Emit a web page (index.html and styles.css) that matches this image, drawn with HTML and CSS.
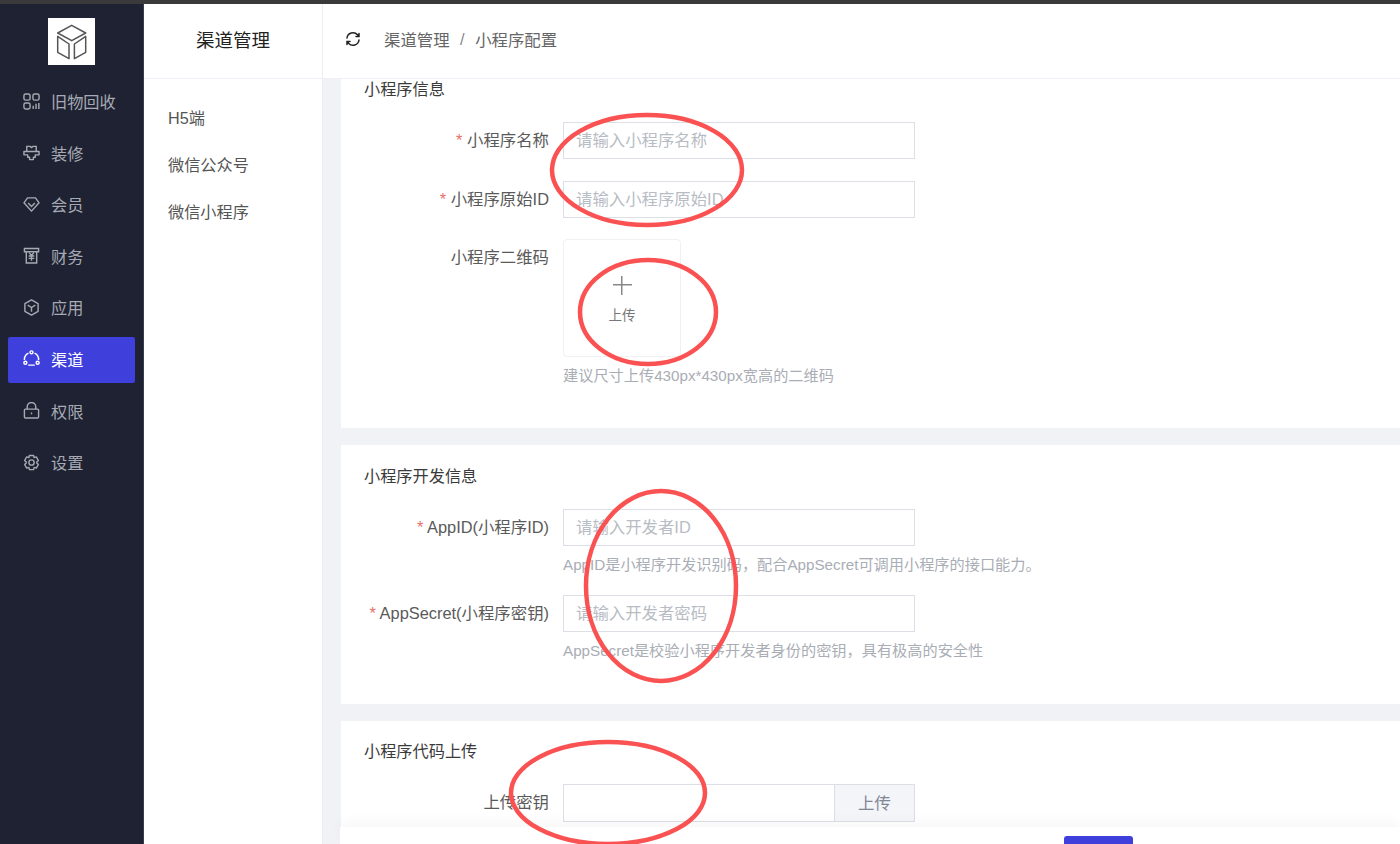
FILE: index.html
```html
<!DOCTYPE html>
<html lang="zh-CN">
<head>
<meta charset="utf-8">
<title>小程序配置</title>
<link rel="stylesheet" href="styles.css">
</head>
<body>
<div class="topstrip"></div>
<div class="app">
  <aside class="side">
    <div class="logo">
      <svg viewBox="0 0 47 47" width="47" height="47" fill="none" stroke="#555" stroke-width="1.500" stroke-linejoin="round"><path d="M23.700 7.300L37.700 15 23.700 22.700 9.700 15z"/><path d="M9.700 18.300V34.300L21 40.700V26z"/><path d="M37.700 18.300V34.300L26.400 40.700V26z"/></svg>
    </div>
    <nav class="nav">
      <a class="nav-item"><svg class="ico" viewBox="0 0 18 18"><rect x="1" y="1" width="6.500" height="6.500" rx="1.800"/><rect x="10.500" y="1" width="6.500" height="6.500" rx="1.800"/><rect x="1" y="10.500" width="6.500" height="6.500" rx="1.800"/><path d="M10.800 13.500V17M13.800 11.500V17M16.800 10.500V17"/></svg><span>旧物回收</span></a>
      <a class="nav-item"><svg class="ico" viewBox="0 0 18 18"><path d="M4 8V2.500h3.500L9 3.800l1.500-1.300H14V8"/><path d="M1 8h16v3.500h-4v2.500h-2v2.500H7V14H5v-2.500H1z" stroke-linejoin="round"/></svg><span>装修</span></a>
      <a class="nav-item"><svg class="ico" viewBox="0 0 18 18"><path d="M4.800 2h8.400L17 7.200 9 16 1 7.200z" stroke-linejoin="round"/><path d="M5.500 7.500L9 11l3.500-3.500"/></svg><span>会员</span></a>
      <a class="nav-item"><svg class="ico" viewBox="0 0 18 18"><path d="M1.500 1.500h15v3.500h-15z"/><path d="M3.500 5v12h11V5"/><path d="M6.500 6L9 9l2.500-3M6 9.500h6M6 12h6M9 9v5.500"/></svg><span>财务</span></a>
      <a class="nav-item"><svg class="ico" viewBox="0 0 18 18"><path d="M9 1l7 4v8l-7 4-7-4V5z" stroke-linejoin="round"/><path d="M5 6.500L9 9l4-2.500M9 9v4.500"/></svg><span>应用</span></a>
      <a class="nav-item active"><svg class="ico" viewBox="0 0 18 18"><circle cx="9" cy="2.500" r="1.600"/><circle cx="2.500" cy="13.500" r="1.600"/><circle cx="15.500" cy="13.500" r="1.600"/><path d="M5.800 3.300A7.500 7.500 0 0 0 1.500 10.500M12.200 3.300A7.500 7.500 0 0 1 16.500 10.500M5.500 16h7"/></svg><span>渠道</span></a>
      <a class="nav-item"><svg class="ico" viewBox="0 0 18 18"><rect x="1.500" y="7.500" width="15" height="9.500" rx="1"/><path d="M4.500 7.500V5a4.500 4.500 0 0 1 9 0v2.500M9 11v2"/></svg><span>权限</span></a>
      <a class="nav-item"><svg class="ico" viewBox="0 0 18 18"><path d="M6.800 1.500h4.400l.6 2.300 2.300-.7 2.200 3.800-1.700 1.600 0 1 1.700 1.600-2.200 3.800-2.300-.7-.6 2.300H6.800l-.6-2.300-2.300.7-2.200-3.800 1.700-1.600 0-1-1.700-1.600 2.200-3.800 2.300.7z" stroke-linejoin="round"/><circle cx="9" cy="9" r="2.800"/></svg><span>设置</span></a>
    </nav>
  </aside>
  <section class="sub">
    <div class="sub-title">渠道管理</div>
    <ul class="sub-list">
      <li>H5端</li>
      <li>微信公众号</li>
      <li>微信小程序</li>
    </ul>
  </section>
  <main class="main">
    <header class="head">
      <svg class="refresh" viewBox="0 0 16 16" width="16" height="16" fill="none" stroke="#222" stroke-width="1.500" stroke-linecap="round"><path d="M2 7a6 6 0 0 1 10.500-3.200L14 5.500M14 2.500v3h-3"/><path d="M14 9a6 6 0 0 1-10.500 3.200L2 10.500M2 13.500v-3h3"/></svg>
      <span class="crumb">渠道管理</span><span class="sep">/</span><span class="crumb cur">小程序配置</span>
    </header>
    <div class="content">
      <div class="card c1">
        <h3 class="card-title">小程序信息</h3>
        <div class="row"><label class="lbl"><i>*</i> 小程序名称</label><div class="input ph">请输入小程序名称</div></div>
        <div class="row"><label class="lbl"><i>*</i> 小程序原始ID</label><div class="input ph">请输入小程序原始ID</div></div>
        <div class="row r-up"><label class="lbl">小程序二维码</label><div class="up-col"><div class="upload"><span class="plus"></span><span class="up-txt">上传</span></div><p class="hint">建议尺寸上传430px*430px宽高的二维码</p></div></div>
      </div>
      <div class="card c2">
        <h3 class="card-title">小程序开发信息</h3>
        <div class="row r-h"><label class="lbl"><i>*</i> AppID(小程序ID)</label><div class="up-col"><div class="input ph">请输入开发者ID</div><p class="hint h2">AppID是小程序开发识别码，配合AppSecret可调用小程序的接口能力。</p></div></div>
        <div class="row r-h"><label class="lbl"><i>*</i> AppSecret(小程序密钥)</label><div class="up-col"><div class="input ph">请输入开发者密码</div><p class="hint h2">AppSecret是校验小程序开发者身份的密钥，具有极高的安全性</p></div></div>
      </div>
      <div class="card c3">
        <h3 class="card-title">小程序代码上传</h3>
        <div class="row"><label class="lbl">上传密钥</label><div class="group"><div class="field"></div><div class="addon">上传</div></div></div>
      </div>
      <div class="footer"><button class="save" type="button"></button></div>
    </div>
  </main>
</div>
<svg class="marks" width="1400" height="844" viewBox="0 0 1400 844" fill="none" stroke="#fa5252" stroke-width="4.500">
  <ellipse cx="647" cy="170" rx="95" ry="55"/>
  <ellipse cx="648" cy="312" rx="68" ry="52"/>
  <ellipse cx="661" cy="586" rx="75" ry="95"/>
  <ellipse cx="608" cy="793" rx="97" ry="51"/>
</svg>
</body>
</html>
```
FILE: styles.css
```css
* { box-sizing: border-box; }
html, body { margin: 0; height: 100%; }
body {
  width: 1400px; height: 844px; overflow: hidden; position: relative;
  display: flex; flex-direction: column;
  font-family: "Liberation Sans", "Noto Sans CJK SC", sans-serif;
  background: #f0f2f5; color: #555;
}
.topstrip { height: 3.500px; background: #3a3a3a; flex: none; }
.app { flex: 1; display: flex; min-height: 0; }

.side { width: 144px; flex: none; background: #1e2233; border-right: 1px solid #3a3e4c; }
.logo { width: 47px; height: 47px; margin: 14.500px auto 0; background: #fff; }
.logo svg { display: block; }
.nav { margin-top: 14px; display: flex; flex-direction: column; gap: 5.600px; padding: 0 8px; }
.nav-item { height: 46px; display: flex; align-items: center; gap: 11px; padding: 0 0 2px 15px; color: #a7aab2; font-size: 16.200px; border-radius: 2px; }
.nav-item.active { background: #3f3fdc; color: #fff; }
.ico { width: 17px; height: 17px; flex: none; fill: none; stroke: currentColor; stroke-width: 1.500; }

.sub { width: 179px; flex: none; background: #fff; border-right: 1px solid #eceef6; }
.sub-title { height: 75px; padding-bottom: 3px; display: flex; align-items: center; justify-content: center; font-size: 18.500px; color: #222; border-bottom: 1px solid #eef0f6; }
.sub-list { list-style: none; margin: 16px 0 0; padding: 0 0 0 24px; font-size: 16.200px; color: #555; }
.sub-list li { height: 47px; line-height: 47px; }

.main { flex: 1; min-width: 0; display: flex; flex-direction: column; }
.head { height: 75px; flex: none; background: #fff; display: flex; align-items: center; padding: 0 0 3px 22px; font-size: 16.400px; color: #666; border-bottom: 1px solid #eef0f6; }
.refresh { margin-right: 23px; }
.sep { margin: 0 10.500px; color: #888; }

.content { flex: 1; position: relative; overflow: hidden; padding-left: 18px; min-height: 0; display: flex; flex-direction: column; gap: 17px; }
.card { background: #fff; padding-left: 23px; flex: none; }
.c1 { height: 349.500px; }
.c2 { height: 258.500px; }
.c3 { height: 160px; }
.card-title { margin: 0; font-weight: 400; font-size: 16.200px; color: #3a3a3a; line-height: 22px; }
.c1 .card-title { height: 43px; margin-top: -1px; padding-bottom: 1px; box-sizing: content-box; height: 43px; }
.c2 .card-title { padding-top: 19.500px; height: 63.500px; }
.c3 .card-title { padding-top: 19px; height: 63px; }

.row { display: flex; align-items: flex-start; margin-bottom: 22px; }
.lbl { width: 185px; margin-right: 14px; flex: none; text-align: right; line-height: 37px; font-size: 16.400px; color: #5a5a5a; white-space: nowrap; }
.lbl i { color: #e8706a; font-style: normal; }
.input { width: 352px; height: 37px; border: 1px solid #dcdfe6; background: #fff; line-height: 35px; padding-left: 12px; font-size: 16.400px; }
.ph { color: #b8bcc4; }
.r-up { margin-top: -1px; }
.r-h { margin-bottom: 20px; }
.up-col { display: flex; flex-direction: column; }
.upload { width: 118px; height: 118px; border: 1px solid #f0f1f4; border-radius: 4px; display: flex; flex-direction: column; align-items: center; padding-top: 36px; }
.plus { width: 19px; height: 19px; background: linear-gradient(#888,#888) center/100% 1.500px no-repeat, linear-gradient(#888,#888) center/1.500px 100% no-repeat; }
.up-txt { font-size: 13.500px; margin-top: 9px; color: #777; }
.hint { margin: 9px 0 0; font-size: 15.200px; line-height: 20px; color: #a9adb5; white-space: nowrap; }
.hint.h2 { margin-top: 9px; }
.group { display: flex; width: 352px; height: 38px; border: 1px solid #dcdfe6; }
.field { flex: 1; background: #fff; }
.addon { width: 80px; border-left: 1px solid #dcdfe6; background: #f4f5f9; color: #808695; font-size: 16.400px; text-align: center; line-height: 36px; }

.footer { position: absolute; left: 17px; right: 0; bottom: 0; height: 17px; background: #fff; box-shadow: 0 -6px 12px rgba(0,0,0,.03); padding: 9px 0 0 724px; }
.save { display: block; width: 69px; height: 30px; border: 0; border-radius: 3px; background: #3f3fdc; padding: 0; }

.marks { position: absolute; left: 0; top: 0; pointer-events: none; }
```
